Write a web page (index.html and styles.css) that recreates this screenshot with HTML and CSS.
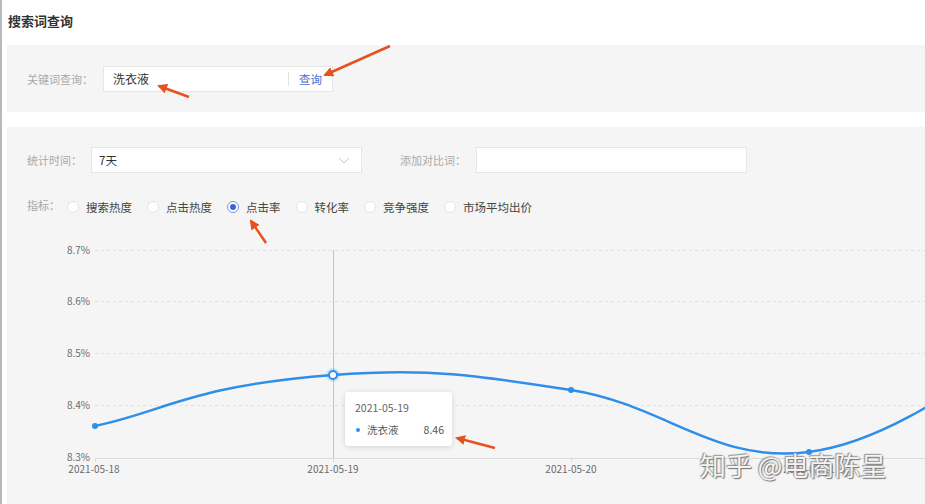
FILE: index.html
```html
<!DOCTYPE html>
<html lang="zh-CN">
<head>
<meta charset="utf-8">
<title>搜索词查询</title>
<link rel="stylesheet" href="styles.css">
</head>
<body>
<div class="page">
  <h1 class="title">搜索词查询</h1>

  <section class="search-panel">
    <span class="label">关键词查询：</span>
    <div class="search-box">
      <span class="search-value">洗衣液</span>
      <span class="search-divider"></span>
      <span class="search-btn">查询</span>
    </div>
  </section>

  <section class="filter-panel">
    <div class="filter-row">
      <span class="label">统计时间：</span>
      <div class="select">
        <span>7天</span>
        <svg class="chevron" width="12" height="7" viewBox="0 0 12 7"><path d="M1 1 L6 6 L11 1" fill="none" stroke="#c8c8c8" stroke-width="1"/></svg>
      </div>
      <span class="label label-compare">添加对比词：</span>
      <div class="text-input"></div>
    </div>

    <div class="metric-row">
      <span class="label metric-label">指标：</span>
      <label class="radio"><span class="dot"></span>搜索热度</label>
      <label class="radio"><span class="dot"></span>点击热度</label>
      <label class="radio checked"><span class="dot"></span>点击率</label>
      <label class="radio"><span class="dot"></span>转化率</label>
      <label class="radio"><span class="dot"></span>竞争强度</label>
      <label class="radio"><span class="dot"></span>市场平均出价</label>
    </div>

    <div class="chart">
      <svg class="chart-svg" width="918" height="287" viewBox="0 0 918 287">
        <g transform="translate(-7,-217)">
          <g class="grid" stroke="#e2e2e2" stroke-width="1" stroke-dasharray="3 3">
            <line x1="95" y1="250.5" x2="925" y2="250.5"/>
            <line x1="95" y1="301.5" x2="925" y2="301.5"/>
            <line x1="95" y1="353.5" x2="925" y2="353.5"/>
            <line x1="95" y1="405.5" x2="925" y2="405.5"/>
          </g>
          <line x1="95" y1="458.5" x2="925" y2="458.5" stroke="#dcdcdc" stroke-width="1"/>
          <g stroke="#dcdcdc" stroke-width="1">
            <line x1="95.5" y1="458" x2="95.5" y2="462"/>
            <line x1="333.5" y1="458" x2="333.5" y2="462"/>
            <line x1="571.5" y1="458" x2="571.5" y2="462"/>
            <line x1="809.5" y1="458" x2="809.5" y2="462"/>
          </g>
          <g class="ylab" text-anchor="end">
            <text x="90" y="254">8.7%</text>
            <text x="90" y="305">8.6%</text>
            <text x="90" y="357">8.5%</text>
            <text x="90" y="409">8.4%</text>
            <text x="90" y="461">8.3%</text>
          </g>
          <g class="xlab" text-anchor="middle">
            <text x="94" y="473">2021-05-18</text>
            <text x="333" y="473">2021-05-19</text>
            <text x="571" y="473">2021-05-20</text>
            <text x="809" y="473">2021-05-21</text>
          </g>
          <line x1="333.5" y1="250" x2="333.5" y2="458" stroke="#c4c4c4" stroke-width="1"/>
          <path d="M95 426 C166 411 190 386 333 375 C428 368 476 375 571 390 C666 405 714 464 809 452 C904 440 999 354 1047 330" fill="none" stroke="#2e8ee8" stroke-width="2.5"/>
          <circle cx="95" cy="426" r="3" fill="#2e8ee8"/>
          <circle cx="571" cy="390" r="3" fill="#2e8ee8"/>
          <circle cx="809" cy="452" r="3" fill="#2e8ee8"/>
          <circle cx="333" cy="375" r="7" fill="#2e8ee8" opacity="0.18"/>
          <circle cx="333" cy="375" r="4" fill="#fff" stroke="#2e8ee8" stroke-width="2"/>
        </g>
      </svg>

      <div class="tooltip">
        <div class="tip-date">2021-05-19</div>
        <div class="tip-row">
          <span class="tip-dot"></span>
          <span class="tip-name">洗衣液</span>
          <span class="tip-val">8.46</span>
        </div>
      </div>

      <div class="watermark">知乎 @电商陈呈</div>
    </div>
  </section>

  <svg class="arrows" width="925" height="504" viewBox="0 0 925 504">
    <defs>
      <marker id="ah" viewBox="0 0 10 10" refX="8" refY="5" markerWidth="4" markerHeight="4" orient="auto">
        <path d="M0 0 L10 5 L0 10 Z" fill="#e6521f"/>
      </marker>
    </defs>
    <g stroke="#e6521f" stroke-width="2.5" fill="none" marker-end="url(#ah)">
      <line x1="388" y1="46" x2="323" y2="75"/>
      <line x1="187" y1="97" x2="157" y2="86"/>
      <line x1="264" y1="243" x2="249" y2="221"/>
      <line x1="493" y1="448" x2="455" y2="438"/>
    </g>
  </svg>
</div>
</body>
</html>
```

FILE: styles.css
```css
* { box-sizing: border-box; }

html, body {
  margin: 0;
  padding: 0;
  background: #fff;
  font-family: "Noto Sans CJK SC", "Noto Sans", sans-serif;
  color: #333;
}

.page {
  position: relative;
  width: 925px;
  height: 504px;
  overflow: hidden;
  border-left: 2px solid #b9b9b9;
  padding-left: 5px;
}

.title {
  margin: 0;
  height: 45px;
  padding: 11px 0 0 1px;
  font-size: 13px;
  font-weight: bold;
  line-height: 20px;
  color: #333;
}

.label {
  font-size: 11px;
  color: #a9a9a9;
  white-space: nowrap;
}

.search-panel {
  height: 67px;
  background: #f5f5f5;
  display: flex;
  align-items: center;
  padding-left: 20px;
}

.search-panel .label {
  width: 76px;
}

.search-box {
  width: 230px;
  height: 26px;
  background: #fff;
  border: 1px solid #e6e6e6;
  display: flex;
  align-items: center;
  padding-left: 9px;
}

.search-value {
  font-size: 12px;
  color: #333;
  width: 175px;
}

.search-divider {
  width: 1px;
  height: 14px;
  background: #e3e3e3;
}

.search-btn {
  margin-left: 10px;
  font-size: 11.5px;
  color: #4a6cd4;
}

.filter-panel {
  margin-top: 15px;
  background: #f5f5f5;
  height: 377px;
  padding-top: 20px;
  position: relative;
}

.filter-row {
  display: flex;
  align-items: center;
  height: 26px;
  padding-left: 20px;
}

.filter-row .label {
  width: 64px;
}

.select {
  width: 271px;
  height: 26px;
  background: #fff;
  border: 1px solid #e6e6e6;
  display: flex;
  align-items: center;
  justify-content: space-between;
  padding: 0 11px 0 7px;
  font-size: 11.5px;
  color: #333;
}

.filter-row .label-compare {
  width: 76px;
  margin-left: 38px;
}

.text-input {
  width: 271px;
  height: 26px;
  background: #fff;
  border: 1px solid #e6e6e6;
}

.metric-row {
  display: flex;
  align-items: center;
  height: 20px;
  margin-top: 24px;
  padding-left: 20px;
}

.metric-label {
  width: 40px;
  position: relative;
  top: -2px;
}

.radio {
  display: flex;
  align-items: center;
  font-size: 11.5px;
  color: #444;
  margin-right: 15px;
}

.radio .dot {
  width: 12px;
  height: 12px;
  border-radius: 50%;
  background: #fff;
  border: 1px solid #e4e4e4;
  margin-right: 7px;
  display: flex;
  align-items: center;
  justify-content: center;
}

.radio.checked .dot {
  border-color: #7d93e6;
}

.radio.checked .dot::after {
  content: "";
  width: 6px;
  height: 6px;
  border-radius: 50%;
  background: #3f5fdb;
}

.chart {
  position: relative;
  height: 287px;
  margin-left: -7px;
}

.chart-svg {
  display: block;
  margin-left: 7px;
}

.ylab text,
.xlab text {
  font-family: "Noto Sans CJK SC", "Noto Sans", sans-serif;
  font-size: 10px;
  fill: #6b6b6b;
}

.tooltip {
  position: absolute;
  left: 345px;
  top: 175px;
  width: 107px;
  height: 54px;
  background: #fff;
  border-radius: 3px;
  box-shadow: 0 1px 5px rgba(0, 0, 0, 0.15);
  padding: 8px 8px 0 10px;
  font-size: 10.5px;
  color: #666;
}

.tip-date {
  line-height: 16px;
}

.tip-row {
  display: flex;
  align-items: center;
  margin-top: 6px;
  line-height: 16px;
}

.tip-dot {
  width: 4px;
  height: 4px;
  border-radius: 50%;
  background: #2e8ee8;
  margin: 0 7px 0 1px;
}

.tip-name {
  flex: 1;
  color: #555;
}

.tip-val {
  color: #555;
}

.watermark {
  position: absolute;
  left: 700px;
  top: 232px;
  font-size: 26px;
  line-height: 32px;
  color: rgba(255, 255, 255, 0.92);
  white-space: nowrap;
  text-shadow: 1px 1px 1px #777, -1px -1px 1px #9a9a9a, 0 0 2px #888;
}

.arrows {
  position: absolute;
  left: 0;
  top: 0;
  pointer-events: none;
}
```
